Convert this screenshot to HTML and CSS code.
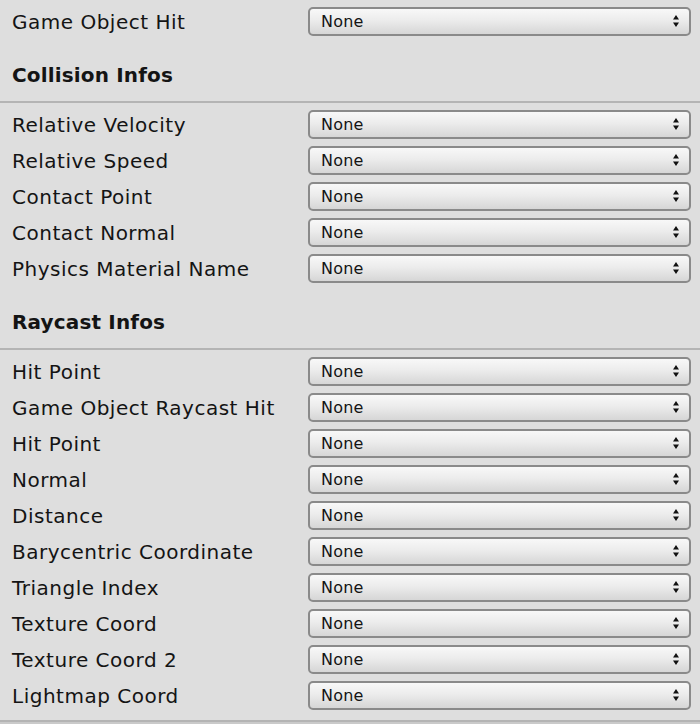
FILE: index.html
```html
<!DOCTYPE html>
<html>
<head>
<meta charset="utf-8">
<link rel="stylesheet" href="styles.css">
</head>
<body>
<div class="panel">
  <div class="row"><span class="label">Game Object Hit</span><div class="select"><span>None</span><svg class="arrows" viewBox="0 0 6 12"><path d="M3 0 L6 4.5 L0 4.5 Z M0 7.5 L6 7.5 L3 12 Z"/></svg></div></div>

  <div class="header">Collision Infos</div>
  <div class="section">
    <div class="row"><span class="label">Relative Velocity</span><div class="select"><span>None</span><svg class="arrows" viewBox="0 0 6 12"><path d="M3 0 L6 4.5 L0 4.5 Z M0 7.5 L6 7.5 L3 12 Z"/></svg></div></div>
    <div class="row"><span class="label">Relative Speed</span><div class="select"><span>None</span><svg class="arrows" viewBox="0 0 6 12"><path d="M3 0 L6 4.5 L0 4.5 Z M0 7.5 L6 7.5 L3 12 Z"/></svg></div></div>
    <div class="row"><span class="label">Contact Point</span><div class="select"><span>None</span><svg class="arrows" viewBox="0 0 6 12"><path d="M3 0 L6 4.5 L0 4.5 Z M0 7.5 L6 7.5 L3 12 Z"/></svg></div></div>
    <div class="row"><span class="label">Contact Normal</span><div class="select"><span>None</span><svg class="arrows" viewBox="0 0 6 12"><path d="M3 0 L6 4.5 L0 4.5 Z M0 7.5 L6 7.5 L3 12 Z"/></svg></div></div>
    <div class="row"><span class="label">Physics Material Name</span><div class="select"><span>None</span><svg class="arrows" viewBox="0 0 6 12"><path d="M3 0 L6 4.5 L0 4.5 Z M0 7.5 L6 7.5 L3 12 Z"/></svg></div></div>
  </div>

  <div class="header">Raycast Infos</div>
  <div class="section last">
    <div class="row"><span class="label">Hit Point</span><div class="select"><span>None</span><svg class="arrows" viewBox="0 0 6 12"><path d="M3 0 L6 4.5 L0 4.5 Z M0 7.5 L6 7.5 L3 12 Z"/></svg></div></div>
    <div class="row"><span class="label">Game Object Raycast Hit</span><div class="select"><span>None</span><svg class="arrows" viewBox="0 0 6 12"><path d="M3 0 L6 4.5 L0 4.5 Z M0 7.5 L6 7.5 L3 12 Z"/></svg></div></div>
    <div class="row"><span class="label">Hit Point</span><div class="select"><span>None</span><svg class="arrows" viewBox="0 0 6 12"><path d="M3 0 L6 4.5 L0 4.5 Z M0 7.5 L6 7.5 L3 12 Z"/></svg></div></div>
    <div class="row"><span class="label">Normal</span><div class="select"><span>None</span><svg class="arrows" viewBox="0 0 6 12"><path d="M3 0 L6 4.5 L0 4.5 Z M0 7.5 L6 7.5 L3 12 Z"/></svg></div></div>
    <div class="row"><span class="label">Distance</span><div class="select"><span>None</span><svg class="arrows" viewBox="0 0 6 12"><path d="M3 0 L6 4.5 L0 4.5 Z M0 7.5 L6 7.5 L3 12 Z"/></svg></div></div>
    <div class="row"><span class="label">Barycentric Coordinate</span><div class="select"><span>None</span><svg class="arrows" viewBox="0 0 6 12"><path d="M3 0 L6 4.5 L0 4.5 Z M0 7.5 L6 7.5 L3 12 Z"/></svg></div></div>
    <div class="row"><span class="label">Triangle Index</span><div class="select"><span>None</span><svg class="arrows" viewBox="0 0 6 12"><path d="M3 0 L6 4.5 L0 4.5 Z M0 7.5 L6 7.5 L3 12 Z"/></svg></div></div>
    <div class="row"><span class="label">Texture Coord</span><div class="select"><span>None</span><svg class="arrows" viewBox="0 0 6 12"><path d="M3 0 L6 4.5 L0 4.5 Z M0 7.5 L6 7.5 L3 12 Z"/></svg></div></div>
    <div class="row"><span class="label">Texture Coord 2</span><div class="select"><span>None</span><svg class="arrows" viewBox="0 0 6 12"><path d="M3 0 L6 4.5 L0 4.5 Z M0 7.5 L6 7.5 L3 12 Z"/></svg></div></div>
    <div class="row"><span class="label">Lightmap Coord</span><div class="select"><span>None</span><svg class="arrows" viewBox="0 0 6 12"><path d="M3 0 L6 4.5 L0 4.5 Z M0 7.5 L6 7.5 L3 12 Z"/></svg></div></div>
  </div>
  <div class="footer"></div>
</div>
</body>
</html>
```
FILE: styles.css
```css
html, body {
  margin: 0;
  padding: 0;
  background: #dedede;
}
body {
  font-family: "DejaVu Sans", "Liberation Sans", sans-serif;
  color: #141414;
}
.panel {
  padding-top: 3px;
  display: flex;
  flex-direction: column;
}
.row {
  height: 36px;
  display: flex;
  align-items: center;
  padding-left: 12px;
  padding-right: 9px;
}
.label {
  width: 296px;
  flex: none;
  font-size: 20px;
  letter-spacing: 0.5px;
  white-space: nowrap;
  padding-top: 2px;
}
.select {
  flex: 1;
  height: 25px;
  border: 2px solid #8a8a8a;
  border-radius: 5px;
  background: linear-gradient(#f8f8f8 0%, #ececec 45%, #d6d6d6 100%);
  display: flex;
  align-items: center;
  justify-content: space-between;
  padding: 0 10px 0 11px;
  font-size: 16px;
  letter-spacing: 0.2px;
}
.arrows {
  width: 6px;
  height: 12px;
  fill: #111;
}
.header {
  padding: 24px 12px 14px;
  line-height: 24px;
  font-weight: bold;
  font-size: 20px;
  letter-spacing: 0.15px;
  border-bottom: 2px solid #b4b4b4;
}
.section {
  padding-top: 3px;
}
.section.last {
  padding-bottom: 7px;
  border-bottom: 2px solid #b4b4b4;
}
.footer {
  height: 10px;
  background: #cacaca;
}
```
